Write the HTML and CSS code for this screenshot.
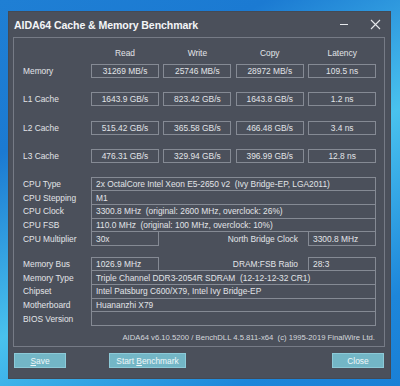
FILE: index.html
```html
<!DOCTYPE html>
<html>
<head>
    <title>AIDA64 Cache &amp; Memory Benchmark</title>
    <meta name="viewport" content="width=device-width, initial-scale=1">
    <link rel="stylesheet" href="styles.css">
</head>
<body>
    <div class="window">
        <div class="titlebar">
            <h1>AIDA64 Cache &amp; Memory Benchmark</h1>
            <div class="controls">
                <span class="min"></span>
                <svg class="close" width="11" height="11" viewBox="0 0 11 11">
                    <path d="M1 1 L10 10 M10 1 L1 10" stroke="#e6e8ec" stroke-width="1.1" fill="none"/>
                </svg>
            </div>
        </div>

        <div class="panel">
            <div class="bench heads">
                <span></span>
                <span class="head">Read</span>
                <span class="head">Write</span>
                <span class="head">Copy</span>
                <span class="head">Latency</span>
            </div>
            <div class="bench">
                <span class="label">Memory</span>
                <span class="box">31269 MB/s</span>
                <span class="box">25746 MB/s</span>
                <span class="box">28972 MB/s</span>
                <span class="box">109.5 ns</span>

                <span class="label">L1 Cache</span>
                <span class="box">1643.9 GB/s</span>
                <span class="box">823.42 GB/s</span>
                <span class="box">1643.8 GB/s</span>
                <span class="box">1.2 ns</span>

                <span class="label">L2 Cache</span>
                <span class="box">515.42 GB/s</span>
                <span class="box">365.58 GB/s</span>
                <span class="box">466.48 GB/s</span>
                <span class="box">3.4 ns</span>

                <span class="label">L3 Cache</span>
                <span class="box">476.31 GB/s</span>
                <span class="box">329.94 GB/s</span>
                <span class="box">396.99 GB/s</span>
                <span class="box">12.8 ns</span>
            </div>

            <div class="info cpu">
                <div class="row">
                    <span class="label">CPU Type</span>
                    <span class="field">2x OctalCore Intel Xeon E5-2650 v2&nbsp; (Ivy Bridge-EP, LGA2011)</span>
                </div>
                <div class="row">
                    <span class="label">CPU Stepping</span>
                    <span class="field">M1</span>
                </div>
                <div class="row">
                    <span class="label">CPU Clock</span>
                    <span class="field">3300.8 MHz&nbsp; (original: 2600 MHz, overclock: 26%)</span>
                </div>
                <div class="row">
                    <span class="label">CPU FSB</span>
                    <span class="field">110.0 MHz&nbsp; (original: 100 MHz, overclock: 10%)</span>
                </div>
                <div class="row split">
                    <span class="label">CPU Multiplier</span>
                    <span class="field short">30x</span>
                    <span class="label right">North Bridge Clock</span>
                    <span class="field short">3300.8 MHz</span>
                </div>
            </div>

            <div class="info mem">
                <div class="row split">
                    <span class="label">Memory Bus</span>
                    <span class="field short">1026.9 MHz</span>
                    <span class="label right">DRAM:FSB Ratio</span>
                    <span class="field short">28:3</span>
                </div>
                <div class="row">
                    <span class="label">Memory Type</span>
                    <span class="field">Triple Channel DDR3-2054R SDRAM&nbsp; (12-12-12-32 CR1)</span>
                </div>
                <div class="row">
                    <span class="label">Chipset</span>
                    <span class="field">Intel Patsburg C600/X79, Intel Ivy Bridge-EP</span>
                </div>
                <div class="row">
                    <span class="label">Motherboard</span>
                    <span class="field">Huananzhi X79</span>
                </div>
                <div class="row">
                    <span class="label">BIOS Version</span>
                    <span class="field"></span>
                </div>
            </div>

            <div class="footer">AIDA64 v6.10.5200 / BenchDLL 4.5.811-x64&nbsp; (c) 1995-2019 FinalWire Ltd.</div>
        </div>

        <div class="buttons">
            <button><u>S</u>ave</button>
            <button class="wide">Start <u>B</u>enchmark</button>
            <button>Close</button>
        </div>
    </div>
</body>
</html>
```

FILE: styles.css
```css
html, body {
    margin: 0;
    height: 386px;
    overflow: hidden;
}
body {
    background: linear-gradient(150deg, #1f7fd4 0%, #1b7ad2 25%, #49c2ee 55%, #1d86da 85%, #1a80d6 100%);
    font-family: "Liberation Sans", Arial, sans-serif;
    font-size: 8.4px;
    color: #e2e4e8;
}
.window {
    margin: 11px 0 0 8px;
    width: 383px;
    height: 368px;
    background: #4b505b;
    box-sizing: border-box;
    border: 1px solid #454a54;
}
.titlebar {
    height: 25px;
    display: flex;
    align-items: center;
    justify-content: space-between;
    padding: 0 9px 0 5px;
}
h1 {
    margin: 0;
    font-size: 10.6px;
    letter-spacing: -0.1px;
    font-weight: bold;
    color: #f4f5f7;
}
.controls {
    display: flex;
    align-items: center;
    gap: 22px;
}
.min {
    display: block;
    width: 8px;
    height: 1px;
    background: #e6e8ec;
}
.panel {
    margin: 0 5px 0 4px;
    height: 310px;
    box-sizing: border-box;
    border: 1px solid #767b86;
    padding: 10px 8px 0 9px;
}
.bench {
    display: grid;
    grid-template-columns: 63.6px repeat(4, 68px);
    column-gap: 4.4px;
    grid-auto-rows: 14px;
    row-gap: 14.3px;
    align-items: center;
}
.bench.heads {
    grid-auto-rows: 10px;
    margin-bottom: 6px;
}
.head {
    text-align: center;
}
.box {
    height: 14px;
    box-sizing: border-box;
    border: 1px solid #858a94;
    display: flex;
    align-items: center;
    justify-content: center;
}
.info {
    margin-top: 15px;
}
.info.mem {
    margin-top: 12px;
}
.row {
    display: flex;
    align-items: center;
    height: 14.6px;
    margin-top: -1px;
}
.row .label {
    width: 68px;
    flex: none;
}
.field {
    flex: 1;
    height: 14.6px;
    box-sizing: border-box;
    border: 1px solid #858a94;
    display: flex;
    align-items: center;
    padding-left: 4px;
}
.field.short {
    flex: none;
    width: 68px;
}
.label.right {
    width: auto;
    flex: 1;
    text-align: right;
    padding-right: 10px;
}
.footer {
    text-align: right;
    margin-top: 7px;
    padding-right: 1px;
    font-size: 7.7px;
    color: #d4d7dc;
}
.buttons {
    display: flex;
    justify-content: space-between;
    padding: 6px 6px 0 5px;
}
button {
    width: 52px;
    height: 15px;
    padding: 0;
    font-family: "Liberation Sans", Arial, sans-serif;
    font-size: 8.4px;
    color: #eef7f9;
    background: #73b6c6;
    border: 1px solid #8ccad8;
}
button.wide {
    width: 77px;
    margin-left: 43px;
    margin-right: auto;
}
```
